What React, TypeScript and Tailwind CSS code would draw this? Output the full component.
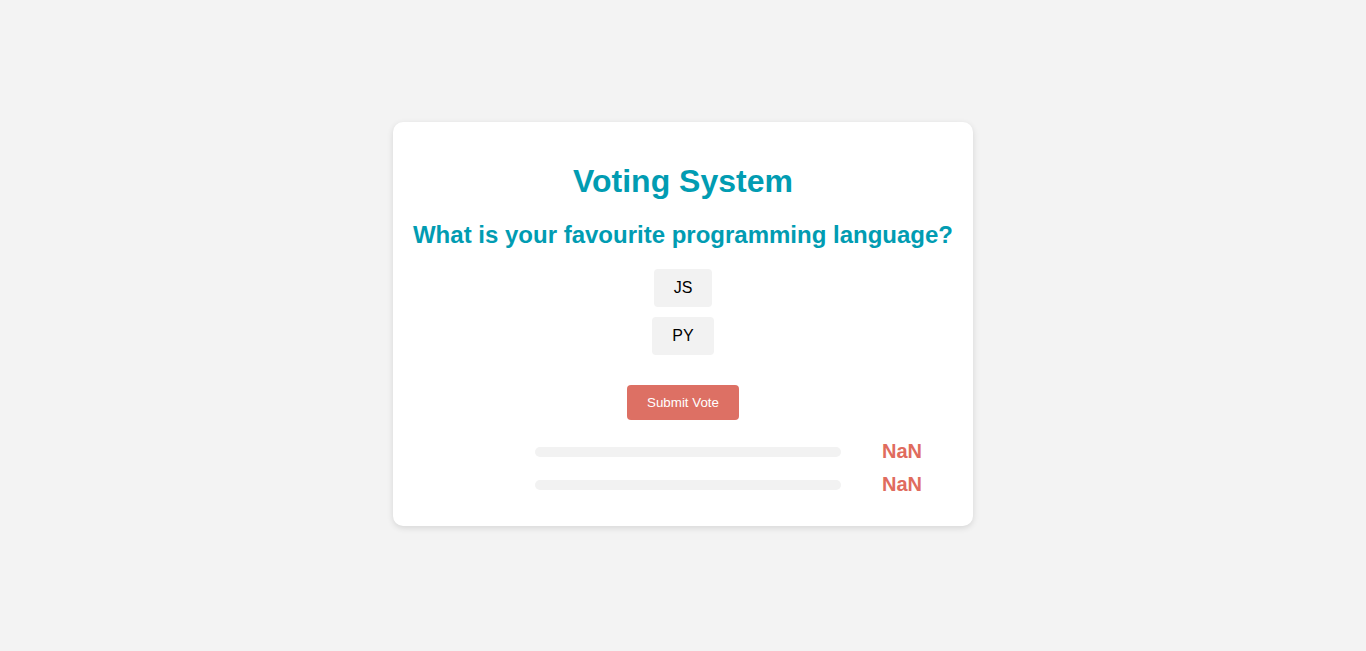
import { useState } from "react"

const OPTIONS = ["JS", "PY"]

export default function App() {
  const [selected, setSelected] = useState<string | null>(null)
  const [votes] = useState<Record<string, number>>({ JS: 0, PY: 0 })

  const total = Object.values(votes).reduce((a, b) => a + b, 0)

  return (
    <div className="min-h-[651px] w-full bg-[#f3f3f3] flex items-center justify-center font-['Liberation_Sans',Arial,sans-serif]">
      <div className="mb-1 w-[580px] bg-white rounded-[10px] shadow-[0_2px_6px_rgba(0,0,0,0.12)] px-5 pt-5 pb-[30px] flex flex-col items-center">
        <h1 className="mt-[21px] text-[32px] leading-[37px] font-bold text-[#019cb2]">Voting System</h1>
        <h2 className="mt-[21px] whitespace-nowrap text-center text-[24px] leading-[28px] font-bold text-[#019cb2]">
          What is your favourite programming language?
        </h2>

        <div className="mt-5 flex flex-col items-center gap-[10px]">
          {OPTIONS.map((opt) => (
            <button
              key={opt}
              onClick={() => setSelected(opt)}
              className={`px-5 py-[10px] rounded-[4px] text-[16px] leading-[18px] text-black ${
                selected === opt ? "bg-[#e4e4e4]" : "bg-[#f2f2f2]"
              }`}
            >
              {opt}
            </button>
          ))}
        </div>

        <button className="mt-[30px] px-5 py-[10px] rounded-[4px] bg-[#dd7064] text-white text-[13.33px] leading-[15px]">
          Submit Vote
        </button>

        <div className="mt-5 w-full flex flex-col gap-[10px]">
          {OPTIONS.map((opt) => {
            const pct = (votes[opt] / total) * 100
            return (
              <div key={opt} className="flex items-center h-[23px]">
                <div className="ml-[122px] mt-[2px] w-[306px] h-[10px] rounded-full bg-[#f2f2f2] overflow-hidden">
                  <div className="h-full bg-[#dd7064]" style={{ width: `${isNaN(pct) ? 0 : pct}%` }} />
                </div>
                <span className="ml-[41px] text-[20px] leading-[23px] font-bold text-[#e06c5e]">
                  {isNaN(pct) ? "NaN" : Math.round(pct)}
                </span>
              </div>
            )
          })}
        </div>
      </div>
    </div>
  )
}
